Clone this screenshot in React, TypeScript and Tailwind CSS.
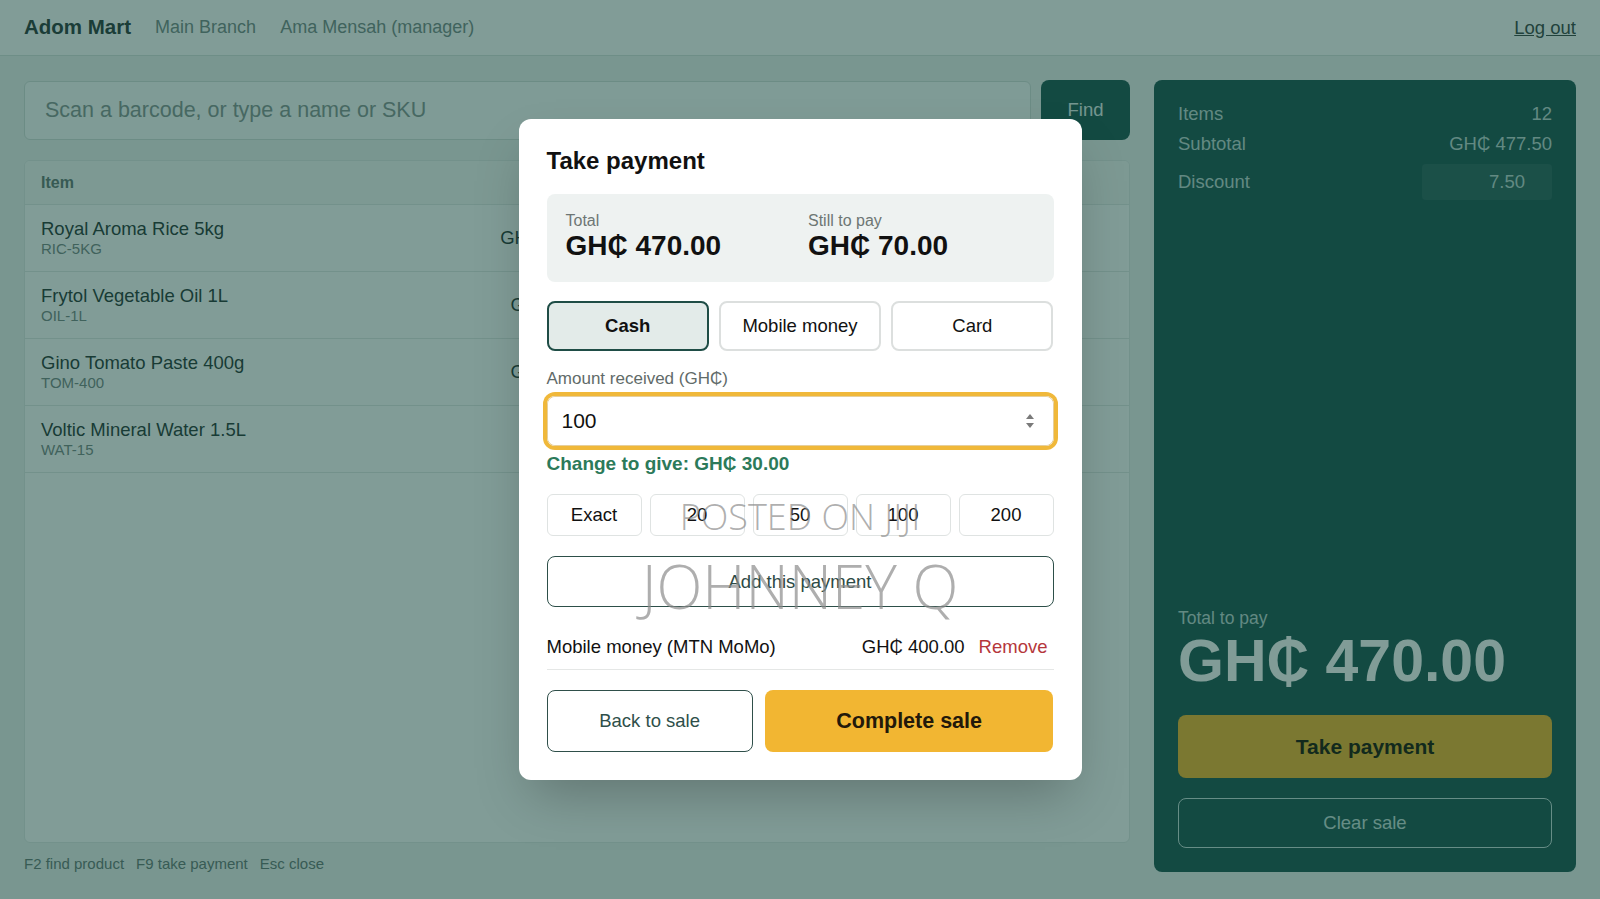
import { useState } from "react";

type CartRow = {
  name: string;
  sku: string;
  price: string;
  qty: number;
  total: string;
};

const rows: CartRow[] = [
  { name: "Royal Aroma Rice 5kg", sku: "RIC-5KG", price: "GH₵ 120.00", qty: 2, total: "GH₵ 240.00" },
  { name: "Frytol Vegetable Oil 1L", sku: "OIL-1L", price: "GH₵ 38.00", qty: 3, total: "GH₵ 114.00" },
  { name: "Gino Tomato Paste 400g", sku: "TOM-400", price: "GH₵ 35.00", qty: 3, total: "GH₵ 105.00" },
  { name: "Voltic Mineral Water 1.5L", sku: "WAT-15", price: "GH₵ 4.50", qty: 4, total: "GH₵ 18.50" },
];

const quickAmounts = ["Exact", "20", "50", "100", "200"];
const methods = ["Cash", "Mobile money", "Card"];

const PaymentDialog = () => {
  const [method, setMethod] = useState("Cash");

  return (
    <div className="w-[563px] rounded-xl bg-white p-7 shadow-2xl">
      <h2 className="text-[24px] font-bold leading-7 text-[#111]">{"Take payment"}</h2>

      <div className="mt-[19px] grid grid-cols-2 gap-4 rounded-lg bg-[#eef2f1] px-[19px] pb-[21px] pt-[17px]">
        <div>
          <div className="text-[16px] leading-5 text-[#6d7674]">{"Total"}</div>
          <div className="text-[28px] font-bold leading-[30px] text-[#111]">{"GH₵ 470.00"}</div>
        </div>
        <div>
          <div className="text-[16px] leading-5 text-[#6d7674]">{"Still to pay"}</div>
          <div className="text-[28px] font-bold leading-[30px] text-[#111]">{"GH₵ 70.00"}</div>
        </div>
      </div>

      <div className="mt-[19px] grid h-[50px] grid-cols-3 gap-2.5">
        {methods.map((m) => (
          <button
            key={m}
            onClick={() => setMethod(m)}
            className={`rounded-lg border-2 text-[18.5px] text-[#111] ${
              method === m ? "border-[#1f4d46] bg-[#e3ebe9] font-bold" : "border-[#dcdfde] bg-white"
            }`}
          >
            {m}
          </button>
        ))}
      </div>

      <div className="mt-[18px] text-[17px] leading-5 text-[#616b69]">{"Amount received (GH₵)"}</div>
      <div className="relative mt-[7px] h-[50px] rounded-lg border border-[#e6cf9c] ring-4 ring-[#f0b83a]">
        <input
          readOnly
          value="100"
          className="h-full w-full rounded-lg bg-white pl-[14px] text-[21px] text-[#111] outline-none"
        />
        <svg
          className="absolute right-[18px] top-1/2 -translate-y-1/2"
          width="10"
          height="20"
          viewBox="0 0 10 20"
        >
          <path d="M5 3 L9 8 L1 8 Z" fill="#7a7a7a" />
          <path d="M1 12 L9 12 L5 17 Z" fill="#7a7a7a" />
        </svg>
      </div>

      <div className="mt-1.5 text-[19px] font-bold leading-6 text-[#2c7a5a]">{"Change to give: GH₵ 30.00"}</div>

      <div className="mt-[18px] grid h-[42px] grid-cols-5 gap-2">
        {quickAmounts.map((a) => (
          <button key={a} className="rounded-md border border-[#dfe3e2] bg-white text-[18.5px] text-[#111]">
            {a}
          </button>
        ))}
      </div>

      <button className="mt-5 h-[51px] w-full rounded-lg border border-[#2d4f49] bg-white text-[18.5px] text-[#2d4a45]">
        {"Add this payment"}
      </button>

      <div className="mt-[18px] flex items-center justify-between border-b border-[#e5e7e6] py-2.5 text-[18.5px] leading-6 text-[#111]">
        <span>{"Mobile money (MTN MoMo)"}</span>
        <div className="flex items-center gap-2">
          <span>{"GH₵ 400.00"}</span>
          <button className="px-1.5 text-[#b5373b]">{"Remove"}</button>
        </div>
      </div>

      <div className="mt-5 grid h-[62px] grid-cols-[1fr_1.4fr] gap-3">
        <button className="rounded-lg border border-[#2f4f4a] bg-white text-[18.5px] text-[#2f4f4a]">
          {"Back to sale"}
        </button>
        <button className="rounded-lg bg-[#f2b632] text-[21.5px] font-bold text-[#23190a]">{"Complete sale"}</button>
      </div>
    </div>
  );
};

export default function App() {
  return (
    <div className="relative h-screen w-full overflow-hidden bg-[#eef3f1] font-['Liberation_Sans','DejaVu_Sans',sans-serif]">
      <header className="flex h-[56px] items-center gap-6 border-b border-[#d9e2df] bg-white px-6 text-[18px]">
        <span className="text-[20.5px] font-bold text-[#33403e]">{"Adom Mart"}</span>
        <span className="text-[#7c8d8b]">{"Main Branch"}</span>
        <span className="text-[#7c8d8b]">{"Ama Mensah (manager)"}</span>
        <a className="ml-auto text-[18.5px] text-[#3e4a48] underline">{"Log out"}</a>
      </header>

      <main className="flex h-[calc(100%-56px)] gap-6 px-6 pb-[25px] pt-6">
        <section className="flex min-w-0 flex-1 flex-col">
          <div className="flex h-[60px] gap-2.5">
            <input
              placeholder="Scan a barcode, or type a name or SKU"
              className="mt-px flex-1 rounded-md border border-[#d5dedb] bg-[#fbfcfc] px-5 text-[21.5px] placeholder:text-[#8a9795]"
            />
            <button className="w-[89px] rounded-lg bg-[#235a55] text-[18.5px] text-[#e4f1ee]">{"Find"}</button>
          </div>

          <div className="mt-5 flex-1 overflow-hidden rounded-md border border-[#e2e8e6] bg-white">
            <div className="grid h-[44px] grid-cols-[1fr_120px_190px_190px_130px] items-center border-b border-[#e3e8e6] bg-[#f6f8f7] px-4 text-[16px] font-bold text-[#6a7a77]">
              <span>{"Item"}</span>
              <span className="text-right">{"Price"}</span>
              <span className="text-center">{"Qty"}</span>
              <span className="text-right">{"Total"}</span>
              <span />
            </div>
            {rows.map((r) => (
              <div
                key={r.sku}
                className="grid h-[67px] grid-cols-[1fr_120px_190px_190px_130px] items-center border-b border-[#e3e8e6] px-4"
              >
                <div>
                  <div className="text-[18.5px] leading-[22px] text-[#2f3c3a]">{r.name}</div>
                  <div className="text-[15px] leading-[18px] text-[#7d8a88]">{r.sku}</div>
                </div>
                <span className="text-right text-[18.5px] text-[#2f3c3a]">{r.price}</span>
                <span className="text-center text-[18.5px] text-[#2f3c3a]">{r.qty}</span>
                <span className="text-right text-[18.5px] text-[#2f3c3a]">{r.total}</span>
                <span />
              </div>
            ))}
          </div>

          <div className="mt-[11px] flex gap-3 text-[15px] leading-5 text-[#6c7c79]">
            <span>{"F2 find product"}</span>
            <span>{"F9 take payment"}</span>
            <span>{"Esc close"}</span>
          </div>
        </section>

        <aside className="mb-[2px] flex w-[422px] flex-col rounded-lg bg-[#235a55] px-6 pb-6 pt-[22px] text-[#c0d9d5]">
          <div className="flex justify-between text-[18.5px] leading-6">
            <span>{"Items"}</span>
            <span>{"12"}</span>
          </div>
          <div className="mt-1.5 flex justify-between text-[18.5px] leading-6">
            <span>{"Subtotal"}</span>
            <span>{"GH₵ 477.50"}</span>
          </div>
          <div className="mt-2 flex items-center justify-between text-[18.5px]">
            <span>{"Discount"}</span>
            <input
              readOnly
              value="7.50"
              className="h-9 w-[130px] rounded bg-white/[0.07] pr-[27px] text-right text-[18.5px] text-[#c0d9d5] outline-none"
            />
          </div>

          <div className="flex-1" />

          <div className="text-[17.5px] leading-5">{"Total to pay"}</div>
          <div className="mt-1 text-[59px] font-bold leading-none text-white">{"GH₵ 470.00"}</div>
          <button className="mt-6 h-[63px] rounded-lg bg-[#f2b632] text-[21px] font-bold text-[#23190a]">
            {"Take payment"}
          </button>
          <button className="mt-5 h-[50px] rounded-lg border border-[#c9e0dc] text-[18.5px] text-[#c9e0dc]">
            {"Clear sale"}
          </button>
        </aside>
      </main>

      <div className="absolute inset-0 bg-[#03392f]/50" />

      <div className="absolute inset-0 flex items-center justify-center">
        <PaymentDialog />
      </div>

      {/* watermark stamped over the screenshot */}
      <div className="pointer-events-none absolute left-1/2 top-[499px] -translate-x-1/2 whitespace-nowrap font-['Open_Sans','Roboto',sans-serif] text-[36px] font-light leading-[36px] text-[#8c8c8c]/70">
        {"POSTED ON JIJI"}
      </div>
      <div className="pointer-events-none absolute left-1/2 top-[556px] -translate-x-1/2 whitespace-nowrap font-['Open_Sans','Roboto',sans-serif] text-[60px] font-light leading-[60px] text-[#8c8c8c]/70">
        {"JOHNNEY Q"}
      </div>
    </div>
  );
}
